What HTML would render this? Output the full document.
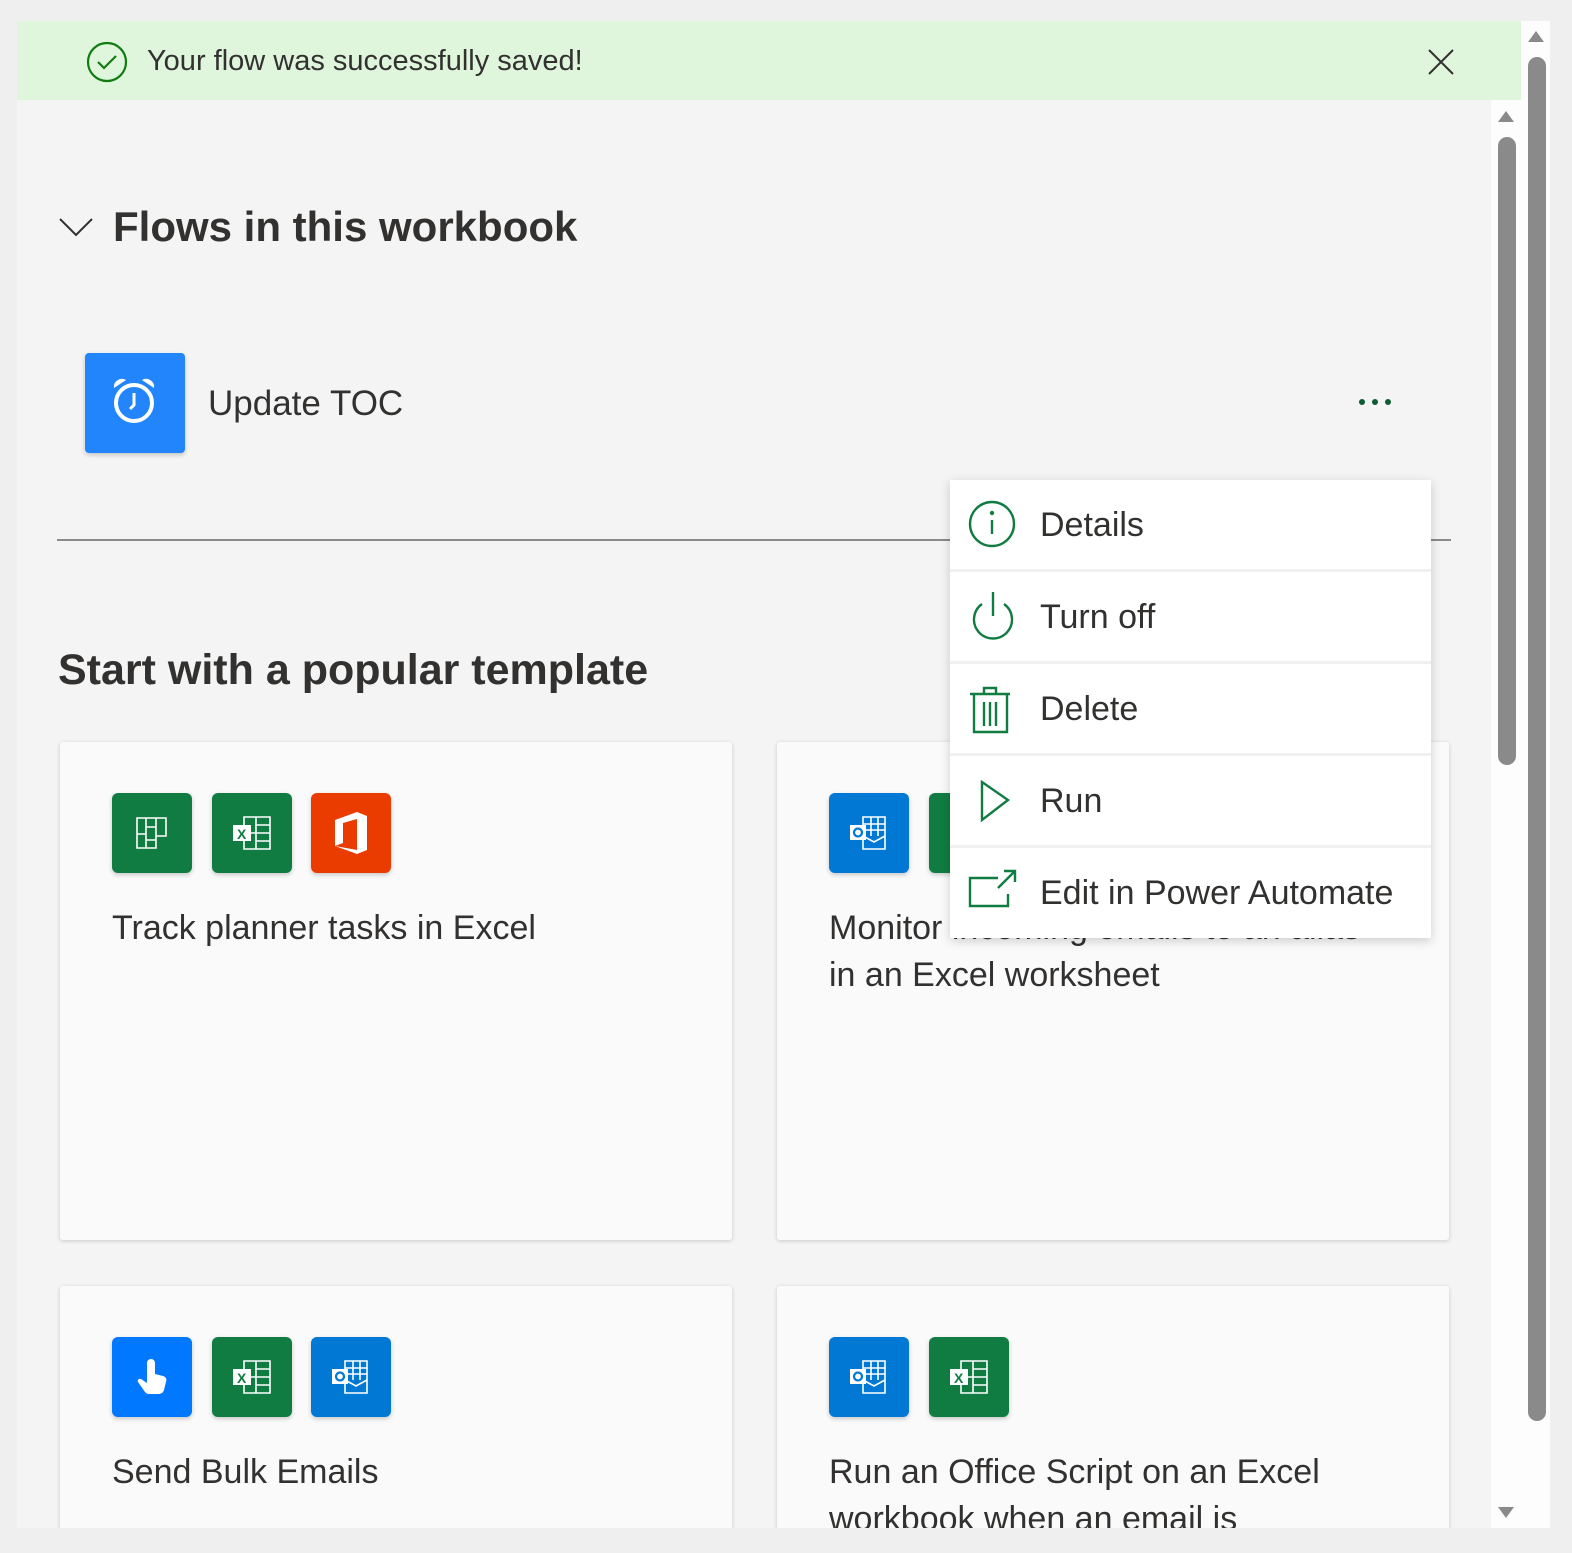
<!DOCTYPE html>
<html><head><meta charset="utf-8"><style>
*{margin:0;padding:0;box-sizing:border-box}
html,body{width:1572px;height:1553px;overflow:hidden}
body{background:#efefef;font-family:"Liberation Sans",sans-serif;color:#323130;position:relative}
.a{position:absolute}
.panel{left:17px;top:21px;width:1504px;height:1507px;background:#f4f4f4;overflow:hidden}
.banner{left:17px;top:21px;width:1504px;height:79px;background:#dff6dd}
.card{background:#fafafa;box-shadow:0 1px 4px rgba(0,0,0,.18);border-radius:3px}
.ic{width:80px;height:80px;border-radius:6px;box-shadow:0 2px 5px rgba(0,0,0,.2);display:flex;align-items:center;justify-content:center}
.g{background:#107c41}.o{background:#eb3c00}.b{background:#0078d4}.t{background:#0078ff}
.ct{font-size:34px;line-height:47px;color:#323130;white-space:nowrap}
.menu{left:950px;top:480px;width:481px;height:458px;background:#fff;box-shadow:0 3px 10px rgba(0,0,0,.18)}
.mi{height:92px;border-bottom:3px solid #f0f0f0;position:relative;font-size:34px}
.mi span{position:absolute;left:90px;top:26px;white-space:nowrap}
.mi svg{position:absolute;left:18px;top:20px}
</style></head><body>
<div class="a panel">
<div class="a card" style="left:43px;top:721px;width:672px;height:498px"></div>
<div class="a card" style="left:760px;top:721px;width:672px;height:498px"></div>
<div class="a card" style="left:43px;top:1265px;width:672px;height:300px"></div>
<div class="a card" style="left:760px;top:1265px;width:672px;height:300px"></div>
</div>
<div class="a banner"></div>
<svg class="a" style="left:86px;top:41px" width="42" height="42" viewBox="0 0 42 42"><circle cx="21" cy="21" r="19" fill="none" stroke="#107c10" stroke-width="2.2"/><path d="M12 21l6 6 12-12" fill="none" stroke="#107c10" stroke-width="2.2"/></svg>
<div class="a" style="left:147px;top:45px;font-size:29px;white-space:nowrap">Your flow was successfully saved!</div>
<svg class="a" style="left:1428px;top:49px" width="26" height="26"><path d="M1 1L25 25M25 1L1 25" stroke="#323130" stroke-width="2"/></svg>

<div class="a" style="left:1521px;top:21px;width:29px;height:1507px;background:#fdfdfd"></div>
<svg class="a" style="left:1526px;top:29px" width="20" height="14"><path d="M10 2L18 13H2Z" fill="#8a8a8a"/></svg>
<div class="a" style="left:1528px;top:57px;width:18px;height:1364px;background:#8a8a8a;border-radius:9px"></div>
<div class="a" style="left:1491px;top:100px;width:30px;height:1428px;background:#fdfdfd"></div>
<svg class="a" style="left:1496px;top:109px" width="20" height="14"><path d="M10 2L18 13H2Z" fill="#8a8a8a"/></svg>
<div class="a" style="left:1498px;top:137px;width:18px;height:628px;background:#8a8a8a;border-radius:9px"></div>
<svg class="a" style="left:1496px;top:1506px" width="20" height="14"><path d="M10 12L18 1H2Z" fill="#8a8a8a"/></svg>

<svg class="a" style="left:58px;top:216px" width="36" height="22"><path d="M2 3L18 19L34 3" fill="none" stroke="#323130" stroke-width="2"/></svg>
<div class="a" style="left:113px;top:203px;font-size:42px;font-weight:bold;white-space:nowrap">Flows in this workbook</div>

<div class="a" style="left:85px;top:353px;width:100px;height:100px;background:#2385fc;border-radius:4px;box-shadow:0 2px 5px rgba(0,0,0,.2)"></div>
<svg class="a" style="left:110px;top:376px" width="50" height="52" viewBox="0 0 50 52"><circle cx="24" cy="27" r="18" fill="none" stroke="#fff" stroke-width="4"/><path d="M24 17V29L20 33" fill="none" stroke="#fff" stroke-width="3"/><path d="M4 12a8 8 0 0 1 12-8z M44 12a8 8 0 0 0-12-8z" fill="#fff"/></svg>
<div class="a" style="left:208px;top:384px;font-size:35px;white-space:nowrap">Update TOC</div>
<div class="a" style="left:1359px;top:399px;width:6px;height:6px;border-radius:3px;background:#0e5c32"></div>
<div class="a" style="left:1372px;top:399px;width:6px;height:6px;border-radius:3px;background:#0e5c32"></div>
<div class="a" style="left:1385px;top:399px;width:6px;height:6px;border-radius:3px;background:#0e5c32"></div>

<div class="a" style="left:57px;top:539px;width:1394px;height:2px;background:#8a8a8a"></div>
<div class="a" style="left:58px;top:646px;font-size:43px;font-weight:bold;white-space:nowrap">Start with a popular template</div>

<div class="a ic g" style="left:112px;top:793px"><svg width="32" height="34" viewBox="0 0 32 34" fill="none" stroke="#fff" stroke-width="1.6"><path d="M1 2H30V20H20V32H1Z M10 2V32 M20 2V20 M1 18H10 M10 11H20 M10 24H20"/></svg></div>
<div class="a ic g" style="left:212px;top:793px"><svg width="40" height="34" viewBox="0 0 40 34"><path d="M12 1H38V33H12Z M24 1V33 M24 9H38 M12 17H38 M24 25H38" fill="none" stroke="#fff" stroke-width="1.6"/><rect x="1" y="9" width="18" height="16" fill="#fff"/><text x="5" y="23" font-size="14" font-weight="bold" fill="#107c41" font-family="Liberation Sans">X</text></svg></div>
<div class="a ic o" style="left:311px;top:793px"><svg width="36" height="42" viewBox="0 0 36 42"><path d="M2 8L24 0L34 4V38L24 42L2 34L24 38V7L10 11V31L2 34Z" fill="#fff"/></svg></div>
<div class="a ct" style="left:112px;top:905px">Track planner tasks in Excel</div>

<div class="a ic b" style="left:829px;top:793px"><svg width="40" height="34" viewBox="0 0 40 34"><path d="M14 1H36V33H14Z M22 1V20 M29 1V20 M14 8H36 M14 14H36 M14 20L25 26L36 20" fill="none" stroke="#fff" stroke-width="1.6"/><rect x="1" y="9" width="16" height="15" fill="#fff"/><circle cx="9" cy="16.5" r="4" fill="none" stroke="#0078d4" stroke-width="2.2"/></svg></div>
<div class="a ic g" style="left:929px;top:793px"></div>
<div class="a ct" style="left:829px;top:905px">Monitor incoming emails to an alias<br>in an Excel worksheet</div>

<div class="a ic t" style="left:112px;top:1337px"><svg width="34" height="40" viewBox="0 0 34 40"><path d="M12 6a4 4 0 0 1 8 0V17l8 2c3 1 4 3 3 6l-2 8c-1 3-3 4-6 4H14c-2 0-3-1-4-2L3 25c-1-2 1-4 3-3l6 4Z" fill="#fff"/></svg></div>
<div class="a ic g" style="left:212px;top:1337px"><svg width="40" height="34" viewBox="0 0 40 34"><path d="M12 1H38V33H12Z M24 1V33 M24 9H38 M12 17H38 M24 25H38" fill="none" stroke="#fff" stroke-width="1.6"/><rect x="1" y="9" width="18" height="16" fill="#fff"/><text x="5" y="23" font-size="14" font-weight="bold" fill="#107c41" font-family="Liberation Sans">X</text></svg></div>
<div class="a ic b" style="left:311px;top:1337px"><svg width="40" height="34" viewBox="0 0 40 34"><path d="M14 1H36V33H14Z M22 1V20 M29 1V20 M14 8H36 M14 14H36 M14 20L25 26L36 20" fill="none" stroke="#fff" stroke-width="1.6"/><rect x="1" y="9" width="16" height="15" fill="#fff"/><circle cx="9" cy="16.5" r="4" fill="none" stroke="#0078d4" stroke-width="2.2"/></svg></div>
<div class="a ct" style="left:112px;top:1449px">Send Bulk Emails</div>

<div class="a ic b" style="left:829px;top:1337px"><svg width="40" height="34" viewBox="0 0 40 34"><path d="M14 1H36V33H14Z M22 1V20 M29 1V20 M14 8H36 M14 14H36 M14 20L25 26L36 20" fill="none" stroke="#fff" stroke-width="1.6"/><rect x="1" y="9" width="16" height="15" fill="#fff"/><circle cx="9" cy="16.5" r="4" fill="none" stroke="#0078d4" stroke-width="2.2"/></svg></div>
<div class="a ic g" style="left:929px;top:1337px"><svg width="40" height="34" viewBox="0 0 40 34"><path d="M12 1H38V33H12Z M24 1V33 M24 9H38 M12 17H38 M24 25H38" fill="none" stroke="#fff" stroke-width="1.6"/><rect x="1" y="9" width="18" height="16" fill="#fff"/><text x="5" y="23" font-size="14" font-weight="bold" fill="#107c41" font-family="Liberation Sans">X</text></svg></div>
<div class="a ct" style="left:829px;top:1449px">Run an Office Script on an Excel<br>workbook when an email is</div>

<div class="a" style="left:0;top:1528px;width:1572px;height:25px;background:#efefef"></div>

<div class="a menu">
 <div class="mi"><svg width="50" height="50" viewBox="0 0 50 50" fill="none" stroke="#107c41" stroke-width="2.4"><circle cx="24" cy="24" r="22"/><path d="M24 20V34"/><circle cx="24" cy="13" r="1" fill="#107c41"/></svg><span>Details</span></div>
 <div class="mi"><svg width="50" height="52" viewBox="0 0 50 52" fill="none" stroke="#107c41" stroke-width="2.4"><path d="M14 12A19 19 0 1 0 36 12"/><path d="M25 0V24"/></svg><span>Turn off</span></div>
 <div class="mi"><svg width="46" height="52" viewBox="0 0 46 52" fill="none" stroke="#107c41" stroke-width="2.4"><path d="M2 10H42 M16 10V4H28V10 M6 10V48H39V10 M16 18V42 M22 18V42 M28 18V42"/></svg><span>Delete</span></div>
 <div class="mi"><svg width="46" height="50" viewBox="0 0 46 50" fill="none" stroke="#107c41" stroke-width="2.4"><path d="M14 6V44L40 24Z"/></svg><span>Run</span></div>
 <div class="mi" style="border:none"><svg width="52" height="50" viewBox="0 0 52 50" fill="none" stroke="#107c41" stroke-width="2.4"><path d="M30 10H2V38H40V26 M30 20L46 4 M36 3H47V14"/></svg><span>Edit in Power Automate</span></div>
</div>
</body></html>
